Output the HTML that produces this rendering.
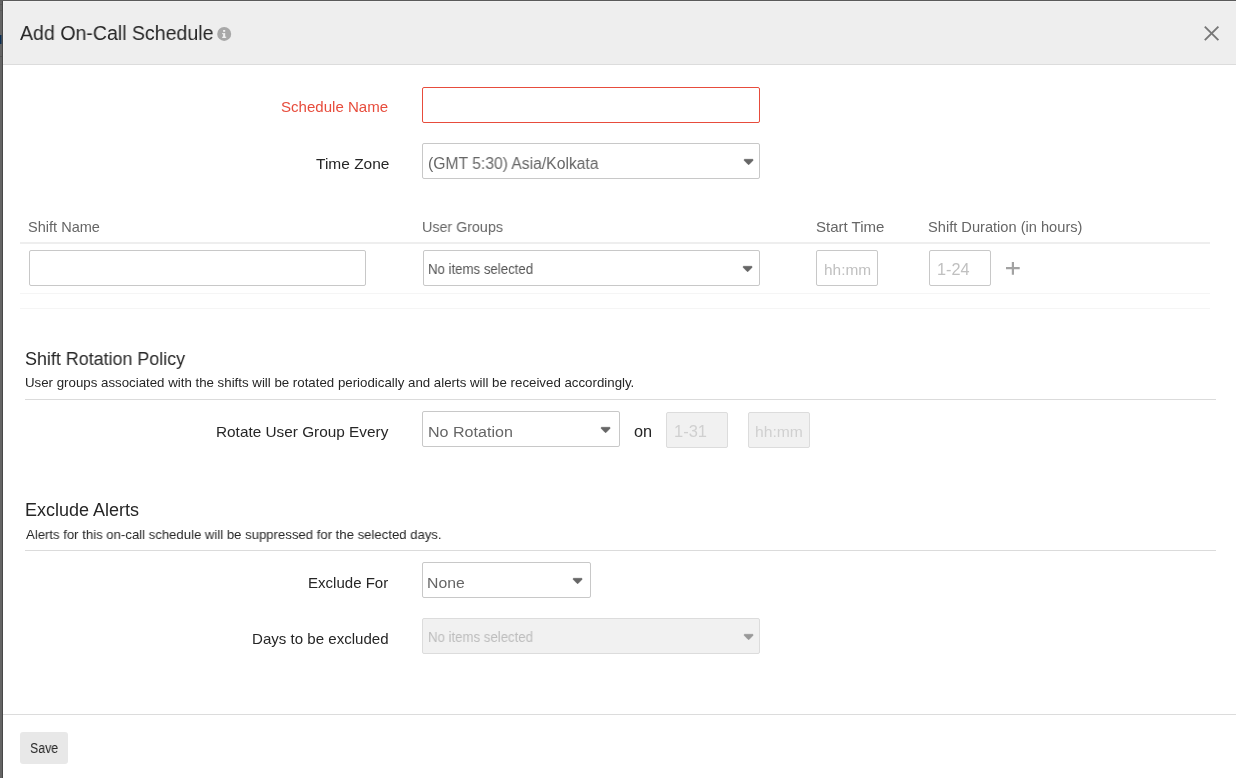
<!DOCTYPE html>
<html><head><meta charset="utf-8">
<style>
*{box-sizing:border-box;margin:0;padding:0}
html,body{width:1236px;height:778px;overflow:hidden;background:#fff;font-family:"Liberation Sans",sans-serif}
.abs{position:absolute}
.t{white-space:nowrap;line-height:1;transform-origin:0 0;will-change:transform}
.box{border:1px solid #c8c8c8;border-radius:2px;background:#fff}
.dis{background:#f1f1f1;border-color:#dcdcdc}
.arrow{width:0;height:0;border-left:4.5px solid transparent;border-right:4.5px solid transparent;border-top:6px solid #666}
.hl{height:1px}
</style></head><body>
<!-- backdrop strip -->
<div class="abs" style="left:0;top:0;width:2px;height:778px;background:#646464"></div>
<div class="abs" style="left:2px;top:0;width:1px;height:778px;background:#484848"></div>
<div class="abs" style="left:0;top:4px;width:2px;height:1px;background:#5a5a5a"></div>
<div class="abs" style="left:0;top:10px;width:2px;height:1px;background:#5a5a5a"></div>
<div class="abs" style="left:0;top:56px;width:2px;height:1px;background:#555"></div>
<div class="abs" style="left:0;top:35px;width:1px;height:9px;background:#0b2d52"></div><div class="abs" style="left:1px;top:35px;width:1px;height:9px;background:#3a4b5c"></div>
<div class="abs" style="left:0;top:0;width:1236px;height:1px;background:#5a5a5a"></div>
<!-- header -->
<div class="abs" style="left:3px;top:1px;width:1233px;height:63px;background:#eeeeee"></div>
<div class="abs" style="left:3px;top:1px;width:1233px;height:1px;background:#f2f2f2"></div>
<div class="abs" style="left:3px;top:1px;width:1px;height:63px;background:#f2f2f2"></div>
<div class="abs" style="left:3px;top:64px;width:1233px;height:1px;background:#dcdcdc"></div>
<svg class="abs" style="left:210px;top:20px" width="28" height="28" viewBox="210 20 28 28">
<circle cx="224.2" cy="33.9" r="7" fill="#a8a8a8"/>
<rect x="223.1" y="30" width="2.1" height="1.8" fill="#f0f0f0"/>
<rect x="223.1" y="33.1" width="2.1" height="4.9" fill="#f0f0f0"/>
<rect x="222.1" y="33.1" width="1.1" height="1.1" fill="#f0f0f0"/>
<rect x="222.1" y="36.7" width="4.1" height="1.2" fill="#f0f0f0"/>
</svg>
<svg class="abs" style="left:1200px;top:20px" width="26" height="26" viewBox="1200 20 26 26">
<path d="M1204.8 26.6L1218.4 40.2M1218.4 26.6L1204.8 40.2" stroke="#777" stroke-width="1.9" fill="none"/>
</svg>

<!-- form top -->
<div class="abs box" style="left:422px;top:87px;width:338px;height:36px;border-color:#e74c3c"></div>
<div class="abs box" style="left:422px;top:143px;width:338px;height:36px"></div>
<svg class="abs" style="left:742px;top:157.1px" width="14" height="11" viewBox="742 157.1 14 11"><path d="M744.3 159.4H752.9V160.6L749.1 164.5H748.1L744.3 160.6Z" fill="#666" stroke="#666" stroke-width="0.6" stroke-linejoin="round"/></svg>

<!-- shift table -->
<div class="abs" style="left:20px;top:242px;width:1190px;height:2px;background:#eeeeee"></div>
<div class="abs box" style="left:29px;top:250px;width:337px;height:36px"></div>
<div class="abs box" style="left:423px;top:250px;width:337px;height:36px"></div>
<svg class="abs" style="left:741px;top:264.1px" width="14" height="11" viewBox="741 264.1 14 11"><path d="M743.3 266.40000000000003H751.9V267.6L748.1 271.5H747.1L743.3 267.6Z" fill="#666" stroke="#666" stroke-width="0.6" stroke-linejoin="round"/></svg>
<div class="abs box" style="left:816px;top:250px;width:62px;height:36px"></div>
<div class="abs box" style="left:929px;top:250px;width:62px;height:36px"></div>
<svg class="abs" style="left:1000px;top:255px" width="26" height="26" viewBox="1000 255 26 26">
<path d="M1006 268.1H1019.7M1012.9 262V274.8" stroke="#a2a2a2" stroke-width="2.2" fill="none"/>
</svg>
<div class="abs hl" style="left:20px;top:293px;width:1190px;background:#f5f5f5"></div>
<div class="abs hl" style="left:20px;top:308px;width:1190px;background:#f5f5f5"></div>

<!-- rotation -->
<div class="abs hl" style="left:25px;top:399px;width:1191px;background:#dbdbdb"></div>
<div class="abs box" style="left:422px;top:411px;width:198px;height:36px"></div>
<svg class="abs" style="left:599px;top:424.8px" width="14" height="11" viewBox="599 424.8 14 11"><path d="M601.3 427.1H609.9V428.3L606.1 432.2H605.1L601.3 428.3Z" fill="#666" stroke="#666" stroke-width="0.6" stroke-linejoin="round"/></svg>
<div class="abs box dis" style="left:666px;top:412px;width:62px;height:36px"></div>
<div class="abs box dis" style="left:748px;top:412px;width:62px;height:36px"></div>

<!-- exclude -->
<div class="abs hl" style="left:25px;top:550px;width:1191px;background:#dbdbdb"></div>
<div class="abs box" style="left:422px;top:562px;width:169px;height:36px"></div>
<svg class="abs" style="left:571px;top:576.2px" width="14" height="11" viewBox="571 576.2 14 11"><path d="M573.3 578.5H581.9V579.7L578.1 583.6H577.1L573.3 579.7Z" fill="#666" stroke="#666" stroke-width="0.6" stroke-linejoin="round"/></svg>
<div class="abs box dis" style="left:422px;top:618px;width:338px;height:36px"></div>
<svg class="abs" style="left:742px;top:632.1px" width="14" height="11" viewBox="742 632.1 14 11"><path d="M744.3 634.4H752.9V635.6L749.1 639.5H748.1L744.3 635.6Z" fill="#999" stroke="#999" stroke-width="0.6" stroke-linejoin="round"/></svg>

<!-- footer -->
<div class="abs hl" style="left:3px;top:714px;width:1233px;background:#dcdcdc"></div>
<div class="abs" style="left:20px;top:732px;width:48px;height:32px;background:#e8e8e8;border-radius:3px"></div>

<div class="abs t" style="left:20.0px;top:23.0px;font-size:20px;color:#262626;transform:scale(0.9777,1)">Add On-Call Schedule</div>
<div class="abs t" style="left:281.4px;top:99.3px;font-size:15px;color:#e74c3c;transform:scale(1.0038,1)">Schedule Name</div>
<div class="abs t" style="left:315.8px;top:155.7px;font-size:15px;color:#262626;transform:scale(1.0329,1)">Time Zone</div>
<div class="abs t" style="left:427.51px;top:155.8px;font-size:15.8px;color:#666;transform:scale(0.9924,1)">(GMT 5:30) Asia/Kolkata</div>
<div class="abs t" style="left:28.1px;top:220.1px;font-size:14.5px;color:#666;transform:scale(1.0029,1)">Shift Name</div>
<div class="abs t" style="left:422.12px;top:220.0px;font-size:14.5px;color:#666;transform:scale(0.984,1)">User Groups</div>
<div class="abs t" style="left:815.56px;top:219.8px;font-size:14.5px;color:#666;transform:scale(1.0359,1)">Start Time</div>
<div class="abs t" style="left:927.99px;top:220.0px;font-size:14.5px;color:#666;transform:scale(1.0086,1)">Shift Duration (in hours)</div>
<div class="abs t" style="left:427.95px;top:262.6px;font-size:13.9px;color:#555;transform:scale(0.9514,1)">No items selected</div>
<div class="abs t" style="left:823.97px;top:261.9px;font-size:15px;color:#c0c0c0;transform:scale(1.0273,1)">hh:mm</div>
<div class="abs t" style="left:937.18px;top:261.8px;font-size:15.9px;color:#c0c0c0;transform:scale(1.0233,1)">1-24</div>
<div class="abs t" style="left:25.11px;top:349.8px;font-size:18px;color:#262626;transform:scale(0.9944,1)">Shift Rotation Policy</div>
<div class="abs t" style="left:25.48px;top:376.4px;font-size:13px;color:#262626;transform:scale(1.0213,1)">User groups associated with the shifts will be rotated periodically and alerts will be received accordingly.</div>
<div class="abs t" style="left:215.98px;top:423.8px;font-size:15px;color:#262626;transform:scale(1.0234,1)">Rotate User Group Every</div>
<div class="abs t" style="left:427.54px;top:423.8px;font-size:15.2px;color:#666;transform:scale(1.0577,1)">No Rotation</div>
<div class="abs t" style="left:633.87px;top:423.9px;font-size:15.8px;color:#262626;transform:scale(1.0312,1)">on</div>
<div class="abs t" style="left:674.46px;top:423.7px;font-size:15.9px;color:#d0d0d0;transform:scale(1.0367,1)">1-31</div>
<div class="abs t" style="left:755.35px;top:423.7px;font-size:15px;color:#d0d0d0;transform:scale(1.0455,1)">hh:mm</div>
<div class="abs t" style="left:24.61px;top:501.0px;font-size:18px;color:#262626;transform:scale(0.9973,1)">Exclude Alerts</div>
<div class="abs t" style="left:26.0px;top:527.8px;font-size:13.4px;color:#262626;transform:scale(0.9813,1)">Alerts for this on-call schedule will be suppressed for the selected days.</div>
<div class="abs t" style="left:307.6px;top:575.0px;font-size:15px;color:#262626;transform:scale(1.0025,1)">Exclude For</div>
<div class="abs t" style="left:427.48px;top:574.9px;font-size:15.5px;color:#666;transform:scale(1.0167,1)">None</div>
<div class="abs t" style="left:251.89px;top:630.7px;font-size:15px;color:#262626;transform:scale(1.0052,1)">Days to be excluded</div>
<div class="abs t" style="left:427.54px;top:630.8px;font-size:13.8px;color:#bdbdbd;transform:scale(0.9574,1)">No items selected</div>
<div class="abs t" style="left:29.61px;top:741.9px;font-size:13.8px;color:#262626;transform:scale(0.8933,1)">Save</div>
</body></html>
